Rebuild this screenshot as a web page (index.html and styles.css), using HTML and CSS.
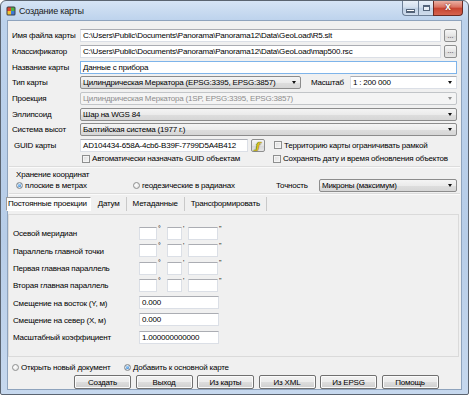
FILE: index.html
```html
<!DOCTYPE html>
<html lang="ru">
<head>
  <meta charset="UTF-8">
  <title>Создание карты</title>
  <link rel="stylesheet" href="styles.css">
</head>
<body>
  <div class="window">
    <div class="titlebar">
      <svg class="app-icon" width="10" height="10" viewBox="0 0 10 10">
        <rect x="0.5" y="0.5" width="9" height="9" rx="1.5" fill="#3a3f46"/>
        <path d="M1.5 1.5h3.5v3.5h-3.5z" fill="#e0442c"/>
        <path d="M5 1.5h3.5v3.5h-3.5z" fill="#4fb043"/>
        <path d="M1.5 5h3.5v3.5h-3.5z" fill="#f1c232"/>
        <path d="M5 5h3.5v3.5h-3.5z" fill="#3d78d8"/>
      </svg>
      <span class="title">Создание карты</span>
      <div class="caption-buttons">
        <span class="cap-btn cap-min"><i></i></span>
        <span class="cap-btn cap-max"><i></i></span>
        <span class="cap-btn cap-close">x</span>
      </div>
    </div>

    <div class="client">
      <!-- основные параметры -->
      <div class="row">
        <span class="lbl">Имя файла карты</span>
        <div class="edit">C:\Users\Public\Documents\Panorama\Panorama12\Data\GeoLoad\R5.slt</div>
        <button class="browse">...</button>
      </div>
      <div class="row">
        <span class="lbl">Классификатор</span>
        <div class="edit">C:\Users\Public\Documents\Panorama\Panorama12\Data\GeoLoad\map500.rsc</div>
        <button class="browse">...</button>
      </div>
      <div class="row">
        <span class="lbl">Название карты</span>
        <div class="edit focused">Данные с прибора</div>
      </div>
      <div class="row">
        <span class="lbl">Тип карты</span>
        <div class="combo type-combo">Цилиндрическая Меркатора (EPSG:3395, EPSG:3857)</div>
        <span class="scale-lbl">Масштаб</span>
        <div class="combo editable">1 : 200 000</div>
      </div>
      <div class="row">
        <span class="lbl">Проекция</span>
        <div class="combo disabled">Цилиндрическая Меркатора (1SP, EPSG:3395, EPSG:3857)</div>
      </div>
      <div class="row">
        <span class="lbl">Эллипсоид</span>
        <div class="combo">Шар на WGS 84</div>
      </div>
      <div class="row">
        <span class="lbl">Система высот</span>
        <div class="combo">Балтийская система (1977 г.)</div>
      </div>
      <div class="row guid-row">
        <span class="lbl guid-lbl">GUID карты</span>
        <div class="edit guid-edit">AD104434-658A-4cb6-B39F-7799D5A4B412</div>
        <button class="guid-btn"><span>ƒ</span></button>
        <label class="check right-check"><span class="box"></span>Территорию карты ограничивать рамкой</label>
      </div>
      <div class="row check-row">
        <label class="check mid-check"><span class="box"></span>Автоматически назначать GUID объектам</label>
        <label class="check right-check"><span class="box"></span>Сохранять дату и время обновления объектов</label>
      </div>

      <div class="sep"></div>

      <!-- хранение координат -->
      <div class="coords">
        <div class="coords-title">Хранение координат</div>
        <div class="coords-row">
          <label class="radio opt-flat"><span class="dot on"></span>плоские в метрах</label>
          <label class="radio opt-geo"><span class="dot"></span>геодезические в радианах</label>
          <span class="acc-lbl">Точность</span>
          <div class="combo">Микроны (максимум)</div>
        </div>
      </div>

      <div class="sep sep-short"></div>

      <!-- вкладки -->
      <div class="tabs">
        <span class="tab active">Постоянные проекции</span>
        <span class="tab">Датум</span>
        <span class="tab">Метаданные</span>
        <span class="tab">Трансформировать</span>
      </div>
      <div class="panel">
        <div class="prow">
          <span class="plbl">Осевой меридиан</span>
          <div class="edit deg"></div><span class="mark">°</span>
          <div class="edit min"></div><span class="mark">'</span>
          <div class="edit sec"></div><span class="mark">"</span>
        </div>
        <div class="prow">
          <span class="plbl">Параллель главной точки</span>
          <div class="edit deg"></div><span class="mark">°</span>
          <div class="edit min"></div><span class="mark">'</span>
          <div class="edit sec"></div><span class="mark">"</span>
        </div>
        <div class="prow">
          <span class="plbl">Первая главная параллель</span>
          <div class="edit deg"></div><span class="mark">°</span>
          <div class="edit min"></div><span class="mark">'</span>
          <div class="edit sec"></div><span class="mark">"</span>
        </div>
        <div class="prow">
          <span class="plbl">Вторая главная параллель</span>
          <div class="edit deg"></div><span class="mark">°</span>
          <div class="edit min"></div><span class="mark">'</span>
          <div class="edit sec"></div><span class="mark">"</span>
        </div>
        <div class="prow">
          <span class="plbl">Смещение на восток (Y, м)</span>
          <div class="edit num">0.000</div>
        </div>
        <div class="prow">
          <span class="plbl">Смещение на север (X, м)</span>
          <div class="edit num">0.000</div>
        </div>
        <div class="prow">
          <span class="plbl">Масштабный коэффициент</span>
          <div class="edit num">1.000000000000</div>
        </div>
      </div>

      <!-- низ окна -->
      <div class="bottom-radios">
        <label class="radio opt-new"><span class="dot"></span>Открыть новый документ</label>
        <label class="radio"><span class="dot on"></span>Добавить к основной карте</label>
      </div>
      <div class="buttons">
        <button class="btn">Создать</button>
        <button class="btn">Выход</button>
        <button class="btn">Из карты</button>
        <button class="btn">Из XML</button>
        <button class="btn">Из EPSG</button>
        <button class="btn">Помощь</button>
      </div>
    </div>
  </div>
</body>
</html>
```

FILE: styles.css
```css
* {
  box-sizing: border-box;
}
body {
  margin: 0;
  background: #fff;
  font-family: "Liberation Sans", Arial, sans-serif;
  font-size: 8px;
  letter-spacing: -0.2px;
  color: #000;
}
.window {
  width: 469px;
  height: 395px;
  display: flex;
  flex-direction: column;
  padding: 0 6px 4px 6px;
  border: 1px solid #5b6470;
  border-radius: 6px 6px 2px 2px;
  background: linear-gradient(#d6e4f5, #bcd2ec 20px, #b7cde8 60%, #c6d8ee);
}

/* заголовок */
.titlebar {
  height: 19px;
  display: flex;
  align-items: center;
  flex: none;
}
.app-icon {
  margin-left: -1px;
  margin-top: 1px;
}
.title {
  margin-left: 3px;
  margin-top: 1px;
  font-size: 9px;
  color: #1b1b1b;
}
.caption-buttons {
  margin-left: auto;
  margin-right: -1px;
  align-self: flex-start;
  display: flex;
}
.cap-btn {
  height: 15px;
  border: 1px solid #6d7f96;
  border-top: none;
  display: flex;
  align-items: center;
  justify-content: center;
  background: linear-gradient(#e8eff8, #d4e0ee 45%, #bfd0e4 50%, #cfdcec);
}
.cap-min {
  width: 16px;
  border-radius: 0 0 0 4px;
  border-right: none;
}
.cap-min i {
  width: 7px;
  height: 2px;
  margin-top: 5px;
  background: #fff;
  border: 1px solid #4f5e70;
  border-width: 0 0 1px 0;
  box-shadow: 0 0 0 1px #54647a;
}
.cap-max {
  width: 15px;
  border-right: none;
}
.cap-max i {
  width: 7px;
  height: 6px;
  border: 1px solid #54647a;
  border-top-width: 2px;
  background: #e9eef5;
}
.cap-close {
  width: 30px;
  border-color: #6c2a22;
  border-radius: 0 0 4px 0;
  background: linear-gradient(#eab0a3, #d9705f 45%, #c7432f 50%, #d5634f);
  color: #fff;
  font-weight: bold;
  font-size: 10px;
  line-height: 1;
  padding-bottom: 2px;
  text-shadow: 0 0 2px #5a1c14;
}

/* рабочая область */
.client {
  flex: 1;
  background: #f0f0f0;
  border: 1px solid #8ea3bd;
  padding: 6.8px 4px 0 4px;
}
.row {
  display: flex;
  align-items: center;
  height: 15.7px;
}
.lbl {
  width: 68px;
  flex: none;
  white-space: nowrap;
}
.edit {
  height: 13px;
  background: #fff;
  border: 1px solid #dbdfe6;
  border-top-color: #abadb3;
  padding: 0 2px;
  line-height: 11px;
  white-space: nowrap;
  overflow: hidden;
}
.row .edit {
  flex: 1;
}
.edit.focused {
  border-color: #7eb4ea;
}
.browse {
  width: 13px;
  height: 13px;
  margin-left: 3px;
  padding: 0;
  border: 1px solid #8e8f8f;
  border-radius: 2px;
  background: linear-gradient(#f6f6f6, #e6e6e6 50%, #d8d8d8 51%, #e8e8e8);
  font-family: inherit;
  font-size: 7px;
  line-height: 8px;
  color: #333;
}
.combo {
  flex: 1;
  height: 13px;
  position: relative;
  border: 1px solid #8c8c8c;
  border-radius: 2px;
  background: linear-gradient(#f4f4f4, #ebebeb 50%, #dedede 51%, #d6d6d6);
  padding: 0 14px 0 2px;
  line-height: 11px;
  white-space: nowrap;
  overflow: hidden;
}
.combo::after {
  content: "";
  position: absolute;
  right: 4px;
  top: 4px;
  border: 2.5px solid transparent;
  border-top: 3px solid #111;
}
.combo.type-combo {
  flex: none;
  width: 221px;
}
.combo.editable {
  border-radius: 0;
  border-color: #dbdfe6;
  border-top-color: #abadb3;
  background: #fff;
}
.combo.disabled {
  background: #f4f4f4;
  border-color: #c2c5c8;
  color: #8d8d8d;
}
.combo.disabled::after {
  border-top-color: #8d8d8d;
}
.scale-lbl {
  width: 39px;
  margin-left: 10px;
  flex: none;
}

/* GUID и флажки */
.guid-lbl {
  padding-left: 2px;
}
.row .guid-edit {
  flex: none;
  width: 168px;
}
.guid-btn {
  width: 14px;
  height: 13px;
  margin-left: 3px;
  padding: 0;
  border: 1px solid #8e8f8f;
  border-radius: 2px;
  background: linear-gradient(#f6f6f6, #e4e4e4 50%, #d6d6d6 51%, #e6e6e6);
  display: flex;
  align-items: center;
  justify-content: center;
}
.guid-btn span {
  font-family: "DejaVu Serif", serif;
  font-style: italic;
  font-weight: bold;
  font-size: 10px;
  color: #e2c21a;
  text-shadow: 0 0 1px #4a5a10, 0 0 1px #4a5a10;
}
.check, .radio {
  display: flex;
  align-items: center;
  white-space: nowrap;
}
.box {
  width: 8px;
  height: 8px;
  margin-right: 2px;
  border: 1px solid #8e8f8f;
  background: linear-gradient(135deg, #dcdcdc, #f6f6f6);
  box-shadow: inset 0 0 0 1px #f4f4f4;
}
.check-row {
  height: 11px;
}
.mid-check {
  margin-left: 70px;
  width: 191px;
}
.right-check {
  margin-left: 9px;
}
.check-row .right-check {
  margin-left: 0;
}

.sep {
  height: 2px;
  margin: 2px -3px 0 -3px;
  border-top: 1px solid #dcdcdc;
  border-bottom: 1px solid #fafafa;
}
.sep-short {
  margin-top: 1px;
}

/* хранение координат */
.coords {
  padding-left: 4px;
}
.coords-title {
  height: 9px;
  line-height: 9px;
  margin-top: 2px;
}
.coords-row {
  display: flex;
  align-items: center;
  height: 13px;
  margin-bottom: 1px;
}
.dot {
  width: 7px;
  height: 7px;
  margin-right: 2px;
  border-radius: 50%;
  border: 1px solid #8e8f8f;
  background: radial-gradient(circle at 40% 40%, #fff, #dcdcdc);
}
.dot.on {
  background: radial-gradient(circle at 45% 40%, #9fd3ff 0, #2a7fd4 55%, #1b5fa8 100%);
  box-shadow: inset 0 0 0 1px #e8e8e8;
}
.opt-flat {
  width: 117px;
}
.opt-geo {
  width: 143px;
}
.acc-lbl {
  width: 43px;
  flex: none;
}

/* вкладки */
.tabs {
  display: flex;
  align-items: center;
  height: 14px;
  margin: 2px 0 0 -6px;
}
.tab {
  padding: 0 6px;
  height: 14px;
  line-height: 14px;
  border-right: 1px solid #c9c9c9;
}
.tab.active {
  padding: 0 3px 0 1px;
  background: #fbfbfb;
  border: 1px solid #9a9a9a;
  border-right-color: #fff;
  border-bottom-color: #fff;
  line-height: 12px;
  margin-right: 1px;
}
.panel {
  height: 143px;
  margin: 3px -2px 0 -4px;
  border: 1px solid #dadada;
  padding: 9.5px 3px 0 4px;
}
.prow {
  display: flex;
  align-items: center;
  height: 17.3px;
}
.plbl {
  width: 126px;
  flex: none;
  padding-top: 1px;
}
.prow .edit {
  flex: none;
}
.deg {
  width: 18px;
}
.min {
  width: 15px;
}
.sec {
  width: 30px;
}
.num {
  width: 80px;
}
.mark {
  align-self: flex-start;
  width: 10px;
  padding-left: 1px;
  font-size: 7px;
  line-height: 7px;
}
.mark + .min + .mark {
  width: 6px;
}

/* нижняя часть */
.bottom-radios {
  display: flex;
  align-items: center;
  height: 10px;
  margin-top: 5px;
}
.opt-new {
  width: 112px;
}
.buttons {
  display: flex;
  gap: 4.5px;
  padding-left: 62px;
  margin-top: 3px;
}
.btn {
  width: 57px;
  height: 14px;
  padding: 0;
  border: 1px solid #707070;
  border-radius: 2px;
  background: linear-gradient(#f2f2f2, #ebebeb 50%, #dddddd 51%, #cfcfcf);
  box-shadow: inset 0 0 0 1px #fbfbfb;
  font-family: inherit;
  font-size: 8px;
  letter-spacing: -0.2px;
  color: #000;
}
```
